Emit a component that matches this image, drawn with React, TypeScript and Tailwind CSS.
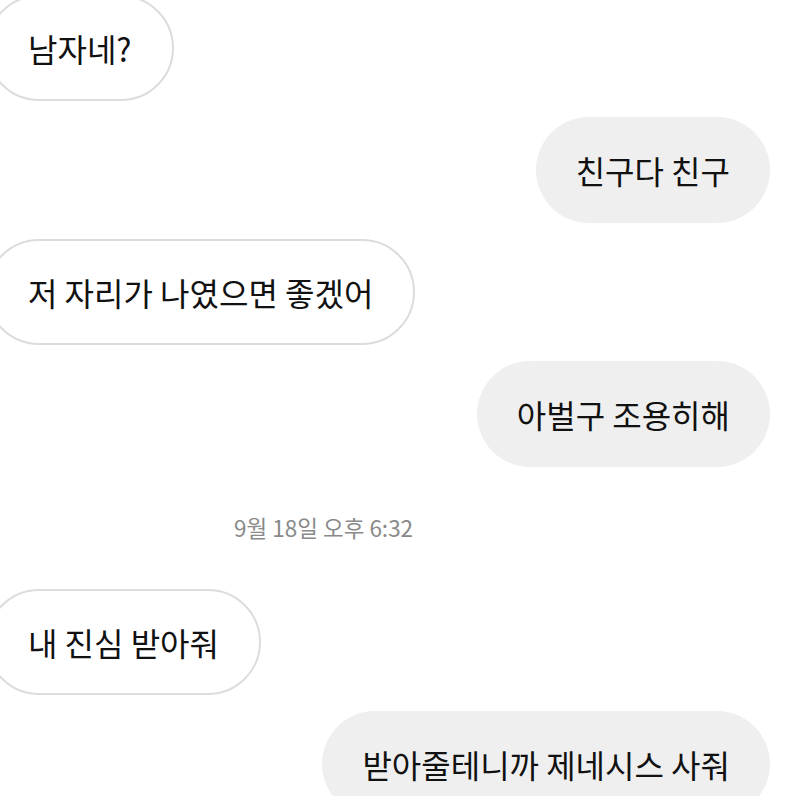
const font = { fontFamily: '"Noto Sans CJK KR", "Noto Sans", sans-serif' }

type Msg = { side: "in" | "out" | "time"; text: string }

const messages: Msg[] = [
  { side: "in", text: "남자네?" },
  { side: "out", text: "친구다 친구" },
  { side: "in", text: "저 자리가 나였으면 좋겠어" },
  { side: "out", text: "아벌구 조용히해" },
  { side: "time", text: "9월 18일 오후 6:32" },
  { side: "in", text: "내 진심 받아줘" },
  { side: "out", text: "받아줄테니까 제네시스 사줘" },
]

function Bubble({ side, text }: { side: "in" | "out"; text: string }) {
  if (side === "in") {
    return (
      <div className="flex justify-start">
        <div className="-ml-[14px] flex h-[106px] items-center rounded-full border-2 border-[#dcdcdc] bg-white px-[40px] text-[32px] text-[#111]">
          {text}
        </div>
      </div>
    )
  }
  return (
    <div className="flex justify-end pr-[30px]">
      <div className="flex h-[106px] items-center rounded-full bg-[#efefef] px-[40px] text-[32px] text-[#111]">
        {text}
      </div>
    </div>
  )
}

export default function App() {
  return (
    <div className="h-[796px] w-[800px] overflow-hidden bg-white" style={font}>
      <div className="-mt-[5px] flex flex-col gap-[16px]">
        {messages.map((m, i) =>
          m.side === "time" ? (
            <div key={i} className="flex h-[90px] items-center pl-[234px] text-[22.5px] text-[#8a8a8a]">
              {m.text}
            </div>
          ) : (
            <Bubble key={i} side={m.side} text={m.text} />
          )
        )}
      </div>
    </div>
  )
}
